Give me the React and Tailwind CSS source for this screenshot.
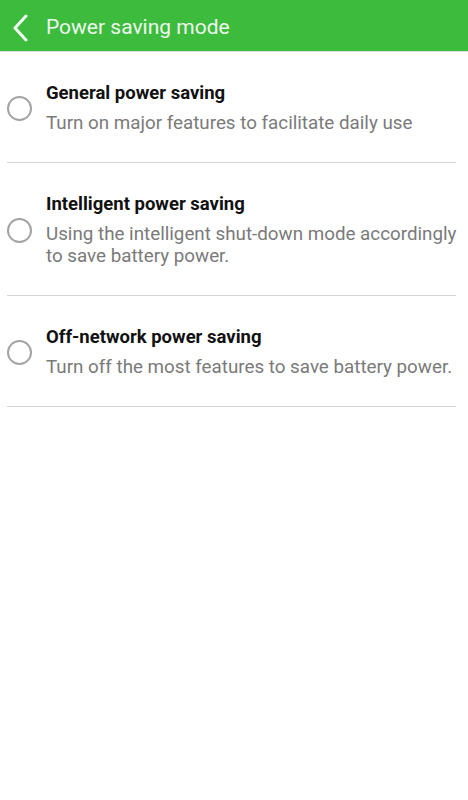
const modes = [
  {
    title: 'General power saving',
    desc: 'Turn on major features to facilitate daily use',
  },
  {
    title: 'Intelligent power saving',
    desc: 'Using the intelligent shut-down mode accordingly to save battery power.',
  },
  {
    title: 'Off-network power saving',
    desc: 'Turn off the most features to save battery power.',
  },
]

export default function App() {
  return (
    <div className="min-h-screen bg-white" style={{ fontFamily: 'Roboto, "Noto Sans", sans-serif' }}>
      <header className="flex h-[52px] items-center pt-[5px] bg-[#3dbb3d] border-b border-[#dcdcdc]">
        <svg className="ml-[11px] w-[18px] h-[28px]" viewBox="0 0 18 28" fill="none">
          <path d="M15 2 L4 14 L15 26" stroke="#f4fbf4" strokeWidth="3" strokeLinecap="round" strokeLinejoin="round" />
        </svg>
        <h1 className="ml-[17px] text-[21px] text-[#eef8ee]">Power saving mode</h1>
      </header>

      <div className="ml-[7px] mr-[12px]">
        {modes.map(mode => (
          <div key={mode.title} className="flex items-center border-b border-[#d4d4d4] pt-[30px] pb-[28px]">
            <div className="w-[25px] h-[25px] rounded-full border-2 border-[#a3a3a3] shrink-0" />
            <div className="ml-[14px] -mr-[8px]">
              <p className="text-[18.5px] leading-[22px] font-bold text-[#111]">{mode.title}</p>
              <p className="mt-[8px] text-[18.8px] leading-[22px] text-[#7a7a7a]">{mode.desc}</p>
            </div>
          </div>
        ))}
      </div>
    </div>
  )
}
